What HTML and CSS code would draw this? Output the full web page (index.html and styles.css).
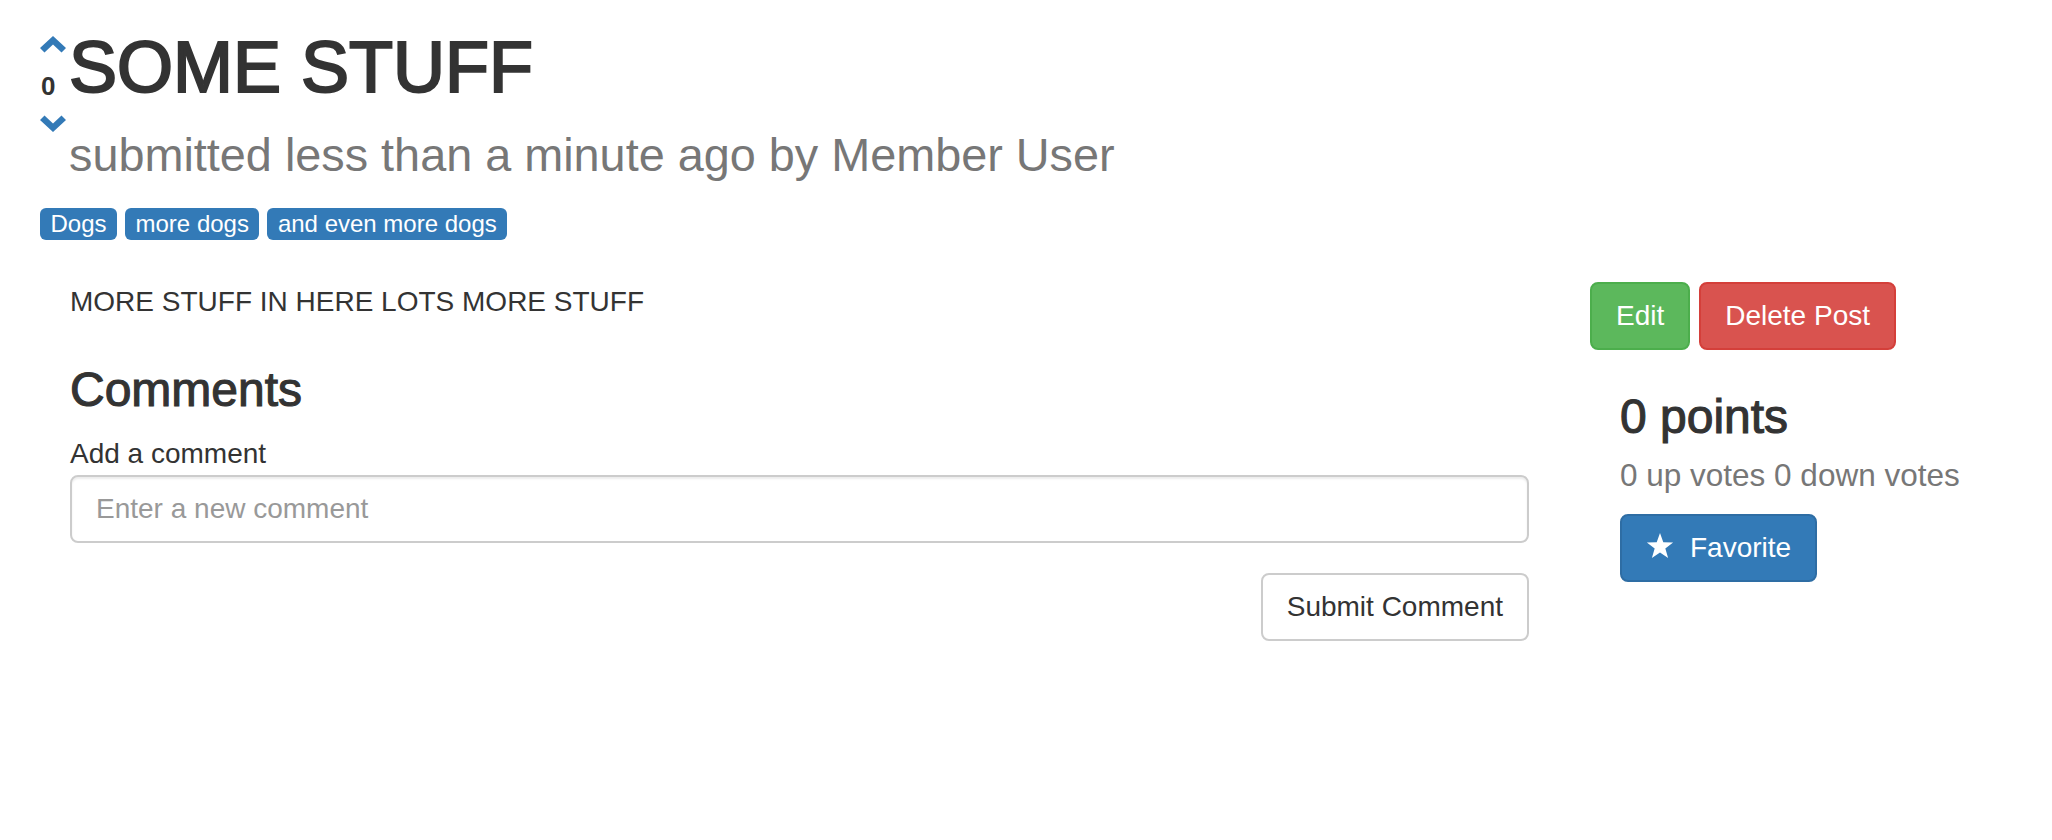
FILE: index.html
```html
<!DOCTYPE html>
<html lang="en">
<head>
<meta charset="utf-8">
<title>SOME STUFF</title>
<link rel="stylesheet" href="styles.css">
</head>
<body>
<div class="page">
  <header class="post-header">
    <div class="vote">
      <svg class="chev" width="26" height="17" viewBox="0 0 26 17" aria-label="Upvote"><polygon points="0,12 13,0 26,12 21.5,16.5 13,8.5 4.5,16.5"/></svg>
      <span class="score">0</span>
      <svg class="chev chev-down" width="26" height="17" viewBox="0 0 26 17" aria-label="Downvote"><polygon points="0,5 13,17 26,5 21.5,0.5 13,8.5 4.5,0.5"/></svg>
    </div>
    <div class="titles">
      <h1 class="title">SOME STUFF</h1>
      <p class="byline">submitted less than a minute ago by Member User</p>
    </div>
  </header>

  <div class="tags">
    <span class="tag">Dogs</span>
    <span class="tag">more dogs</span>
    <span class="tag">and even more dogs</span>
  </div>

  <div class="main">
    <section class="content">
      <p class="body-text">MORE STUFF IN HERE LOTS MORE STUFF</p>
      <h3 class="section-title">Comments</h3>
      <form class="comment-form">
        <label class="field-label" for="comment">Add a comment</label>
        <input id="comment" class="field" type="text" placeholder="Enter a new comment">
        <div class="form-actions">
          <button type="button" class="btn btn-default">Submit Comment</button>
        </div>
      </form>
    </section>

    <aside class="sidebar">
      <div class="actions">
        <button type="button" class="btn btn-success">Edit</button>
        <button type="button" class="btn btn-danger">Delete Post</button>
      </div>
      <div class="stats">
        <h3 class="points">0 points</h3>
        <p class="votes">0 up votes 0 down votes</p>
        <button type="button" class="btn btn-primary btn-icon">
          <svg class="star" width="28" height="25" viewBox="0 0 28 25"><polygon points="14,0 17.29,9.27 27.12,9.54 19.33,15.53 22.11,24.96 14,19.4 5.89,24.96 8.67,15.53 0.88,9.54 10.71,9.27"/></svg>
          <span>Favorite</span>
        </button>
      </div>
    </aside>
  </div>
</div>
</body>
</html>
```

FILE: styles.css
```css
* {
  box-sizing: border-box;
}

html, body {
  margin: 0;
  padding: 0;
  background: #ffffff;
}

body {
  font-family: "Liberation Sans", Arial, Helvetica, sans-serif;
  font-size: 28px;
  line-height: 40px;
  color: #333333;
}

.page {
  padding: 0 0 0 40px;
}

/* Header */
.post-header {
  display: flex;
  align-items: flex-start;
}

.vote {
  width: 29px;
  display: flex;
  flex-direction: column;
  align-items: flex-start;
  padding-top: 36px;
}

.chev {
  display: block;
  fill: #337ab7;
}

.score {
  display: block;
  margin-top: 20px;
  margin-left: 1px;
  font-size: 26px;
  line-height: 26px;
  font-weight: 700;
  color: #333333;
}

.chev-down {
  margin-top: 16px;
}

.titles {
  flex: 1;
}

.title {
  margin: 28px 0 0 0;
  font-size: 72px;
  line-height: 79px;
  font-weight: 500;
  color: #333333;
  -webkit-text-stroke: 2.2px #333333;
}

.byline {
  margin: 23px 0 0 0;
  font-size: 46.8px;
  line-height: 51px;
  color: #777777;
}

/* Tags */
.tags {
  display: flex;
  gap: 8px;
  margin-top: 27px;
}

.tag {
  display: inline-block;
  height: 32px;
  padding: 0 10.5px;
  font-size: 24px;
  line-height: 32px;
  color: #ffffff;
  background: #337ab7;
  border-radius: 6px;
  white-space: nowrap;
}

/* Main area */
.main {
  display: flex;
  align-items: flex-start;
  margin-top: 42px;
}

.content {
  width: 1459px;
  margin-left: 30px;
}

.body-text {
  margin: 0 0 41px 0;
}

.section-title {
  margin: 0 0 18px 0;
  font-size: 48px;
  line-height: 53px;
  font-weight: 500;
  color: #333333;
  -webkit-text-stroke: 1.1px #333333;
}

.comment-form {
  margin: 0;
}

.field-label {
  display: block;
  margin-bottom: 1px;
  font-weight: 400;
}

.field {
  display: block;
  width: 100%;
  height: 68px;
  padding: 12px 24px;
  font-family: inherit;
  font-size: 28px;
  line-height: 40px;
  color: #555555;
  background: #ffffff;
  border: 2px solid #cccccc;
  border-radius: 8px;
  box-shadow: inset 0 2px 2px rgba(0, 0, 0, 0.075);
  outline: none;
}

.field::placeholder {
  color: #999999;
}

.form-actions {
  display: flex;
  justify-content: flex-end;
  margin-top: 30px;
}

/* Buttons */
.btn {
  display: inline-flex;
  align-items: center;
  height: 68px;
  padding: 12px 24px;
  font-family: inherit;
  font-size: 28px;
  line-height: 40px;
  font-weight: 400;
  border: 2px solid transparent;
  border-radius: 8px;
  cursor: pointer;
  white-space: nowrap;
}

.btn-default {
  color: #333333;
  background: #ffffff;
  border-color: #cccccc;
}

.btn-success {
  color: #ffffff;
  background: #5cb85c;
  border-color: #4cae4c;
}

.btn-danger {
  color: #ffffff;
  background: #d9534f;
  border-color: #d43f3a;
}

.btn-primary {
  color: #ffffff;
  background: #337ab7;
  border-color: #2e6da4;
}

.star {
  display: block;
  fill: #ffffff;
  margin-right: 16px;
  margin-top: -6px;
}

/* Sidebar */
.sidebar {
  margin-left: 61px;
}

.actions {
  display: flex;
  gap: 9px;
}

.stats {
  padding-left: 30px;
}

.points {
  margin: 40px 0 0 0;
  font-size: 48px;
  line-height: 53px;
  font-weight: 500;
  color: #333333;
  -webkit-text-stroke: 1.1px #333333;
}

.votes {
  margin: 12px 0 19px 0;
  font-size: 31.5px;
  line-height: 40px;
  color: #777777;
}
```
